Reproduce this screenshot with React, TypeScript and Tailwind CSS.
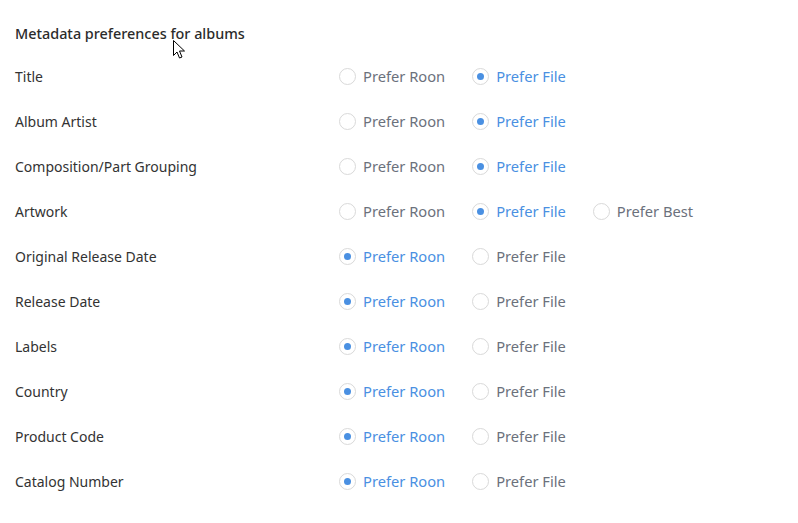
import React from "react";

type Row = { label: string; options: string[]; selected: number };

const rows: Row[] = [
  { label: "Title", options: ["Prefer Roon", "Prefer File"], selected: 1 },
  { label: "Album Artist", options: ["Prefer Roon", "Prefer File"], selected: 1 },
  { label: "Composition/Part Grouping", options: ["Prefer Roon", "Prefer File"], selected: 1 },
  { label: "Artwork", options: ["Prefer Roon", "Prefer File", "Prefer Best"], selected: 1 },
  { label: "Original Release Date", options: ["Prefer Roon", "Prefer File"], selected: 0 },
  { label: "Release Date", options: ["Prefer Roon", "Prefer File"], selected: 0 },
  { label: "Labels", options: ["Prefer Roon", "Prefer File"], selected: 0 },
  { label: "Country", options: ["Prefer Roon", "Prefer File"], selected: 0 },
  { label: "Product Code", options: ["Prefer Roon", "Prefer File"], selected: 0 },
  { label: "Catalog Number", options: ["Prefer Roon", "Prefer File"], selected: 0 },
];

function Radio({ checked }: { checked: boolean }) {
  return (
    <span className="flex h-[17px] w-[17px] shrink-0 items-center justify-center rounded-full border border-[#d9d9d9] bg-white">
      {checked && <span className="h-[7px] w-[7px] rounded-full bg-[#4a90e2]" />}
    </span>
  );
}

export default function App() {
  return (
    <div
      className="relative h-[523px] w-[798px] overflow-hidden bg-white pl-[15px] pt-[24px]"
      style={{ fontFamily: '"Noto Sans", sans-serif' }}
    >
      <h2 className="text-[14.4px] font-medium leading-[20px] text-[#2b2b2b]">
        Metadata preferences for albums
      </h2>
      <div className="mt-[10px] flex flex-col">
        {rows.map((r) => (
          <div key={r.label} className="flex h-[45px] items-center">
            <div className="w-[324px] text-[14px] text-[#333333]">{r.label}</div>
            <div className="flex items-center gap-[27px]">
              {r.options.map((o, i) => (
                <label key={o} className="flex items-center gap-[7px]">
                  <Radio checked={i === r.selected} />
                  <span
                    className={
                      "text-[14.7px] " +
                      (i === r.selected ? "text-[#4a90e2]" : "text-[#6b717c]")
                    }
                  >
                    {o}
                  </span>
                </label>
              ))}
            </div>
          </div>
        ))}
      </div>
      <svg
        className="absolute left-[173px] top-[40px]"
        width="14"
        height="20"
        viewBox="0 0 14 20"
      >
        <path
          d="M0.5 0.5 L0.5 15.5 L4 12 L6.5 18 L9 17 L6.5 11 L11.5 11 Z"
          fill="#ffffff"
          stroke="#000000"
          strokeWidth="1"
          strokeLinejoin="miter"
        />
      </svg>
    </div>
  );
}
